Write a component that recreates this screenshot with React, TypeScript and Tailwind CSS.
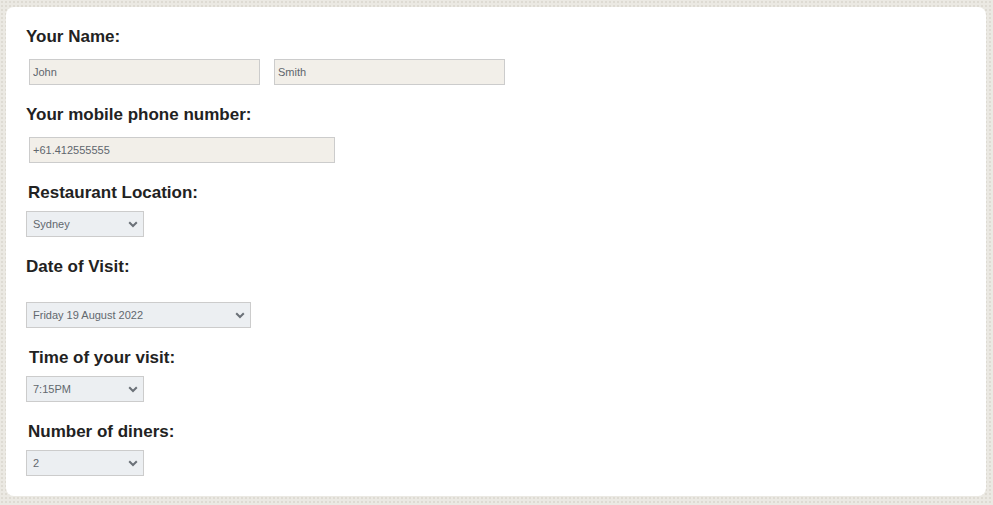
import React from 'react';

const font = { fontFamily: '"Liberation Sans", Arial, sans-serif' };

function Label({ children, className = '' }: { children: React.ReactNode; className?: string }) {
  return (
    <div className={`h-5 leading-[22px] text-[17px] font-bold text-[#222] ${className}`}>{children}</div>
  );
}

function TextBox({ value, width }: { value: string; width: string }) {
  return (
    <input
      readOnly
      value={value}
      className={`h-[26px] ${width} border border-[#cccccc] bg-[#f2efe9] px-[3px] text-[11px] text-[#5f666d] outline-none`}
      style={font}
    />
  );
}

function Select({ value, width }: { value: string; width: string }) {
  return (
    <div className={`relative h-[26px] ${width}`}>
      <select
        value={value}
        onChange={() => {}}
        className="h-full w-full appearance-none border border-[#cccccc] bg-[#eceff2] pl-[6px] text-[11px] text-[#62686e] outline-none"
        style={font}
      >
        <option>{value}</option>
      </select>
      <svg
        className="pointer-events-none absolute right-[6px] top-[10px]"
        width="10"
        height="7"
        viewBox="0 0 10 7"
      >
        <path d="M1.2 1.2 L5 5 L8.8 1.2" fill="none" stroke="#6b7178" strokeWidth="2" />
      </svg>
    </div>
  );
}

export default function App() {
  return (
    <div
      className="h-[505px] w-[993px] bg-[#ebe9e3] bg-[radial-gradient(#dedbd3_1.2px,transparent_1.2px)] bg-[length:4px_4px] pl-[6px] pr-[7px] pt-[7px]"
      style={font}
    >
      <div className="h-[489px] rounded-[8px] bg-white px-5 pt-[19px]">
        <Label>Your Name:</Label>
        <div className="ml-[3px] mt-[13px] flex gap-[14px]">
          <TextBox value="John" width="w-[231px]" />
          <TextBox value="Smith" width="w-[231px]" />
        </div>

        <Label className="mt-[19px]">Your mobile phone number:</Label>
        <div className="ml-[3px] mt-[13px]">
          <TextBox value="+61.412555555" width="w-[306px]" />
        </div>

        <Label className="ml-[2px] mt-[19px]">Restaurant Location:</Label>
        <div className="mt-[9px]">
          <Select value="Sydney" width="w-[118px]" />
        </div>

        <Label className="mt-[19px]">Date of Visit:</Label>
        <div className="mt-[26px]">
          <Select value="Friday 19 August 2022" width="w-[225px]" />
        </div>

        <Label className="ml-[3px] mt-[19px]">Time of your visit:</Label>
        <div className="mt-[9px]">
          <Select value="7:15PM" width="w-[118px]" />
        </div>

        <Label className="ml-[2px] mt-[19px]">Number of diners:</Label>
        <div className="mt-[9px]">
          <Select value="2" width="w-[118px]" />
        </div>
      </div>
    </div>
  );
}
